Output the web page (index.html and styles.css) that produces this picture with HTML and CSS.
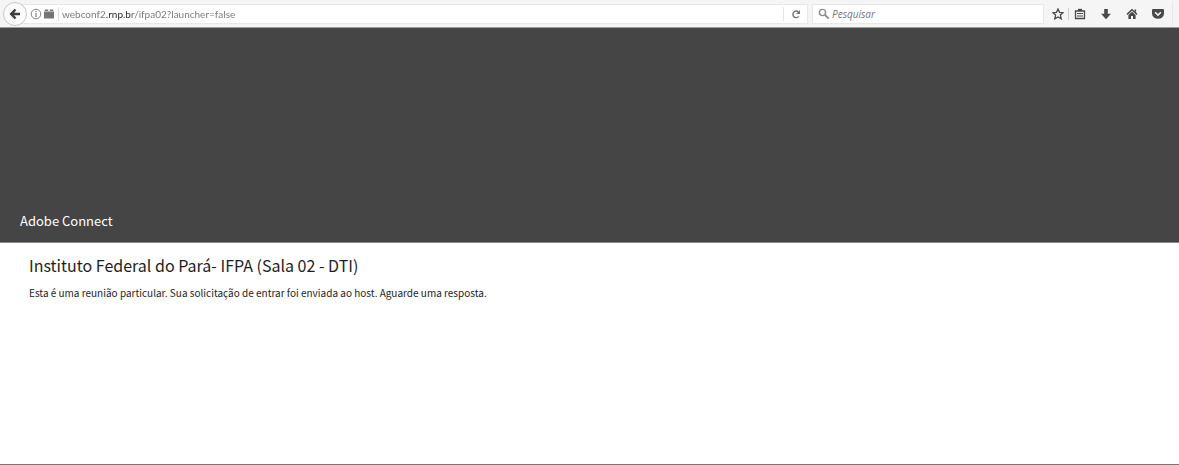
FILE: index.html
```html
<!DOCTYPE html>
<html lang="pt-BR">
<head>
  <meta charset="UTF-8">
  <meta name="viewport" content="width=device-width, initial-scale=1.0">
  <title>Adobe Connect</title>
  <link rel="stylesheet" href="styles.css">
</head>
<body>

  <!-- Barra de navegação -->
  <nav class="toolbar">
    <button class="back-btn" type="button" aria-label="Voltar">
      <svg width="12" height="12" viewBox="0 0 12 12"><path d="M6.5 1.5 2.2 6l4.3 4.5M2.5 6H11" fill="none" stroke="#3d3d3d" stroke-width="2.5"/></svg>
    </button>
    <div class="url-bar">
      <svg width="12" height="12" viewBox="0 0 12 12"><circle cx="6" cy="6" r="4.8" fill="none" stroke="#858585"/><path d="M6 5v4M6 3v1.2" stroke="#858585" stroke-width="1.2"/></svg>
      <svg width="10" height="10" viewBox="0 0 10 10"><path d="M0 2.5h10V9.5H0zM.8.5h3.4v1.4H.8zM5.8.5h3.4v1.4H5.8z" fill="#757575"/></svg>
      <input class="url-input" type="text" aria-label="Endereço" value="webconf2.rnp.br/ifpa02?launcher=false">
      <button class="reload-btn" type="button" aria-label="Recarregar">
        <svg width="10" height="10" viewBox="0 0 10 10"><path d="M7.8 7.4A3.3 3.3 0 1 1 7.4 2.8" fill="none" stroke="#757575" stroke-width="1.4"/><path d="M9 1v4H5z" fill="#757575"/></svg>
      </button>
    </div>
    <div class="search-bar">
      <svg width="12" height="12" viewBox="0 0 12 12"><circle cx="4.5" cy="4.5" r="3.1" fill="none" stroke="#8d8d8d" stroke-width="1.4"/><path d="m7 7 3.7 3.7" stroke="#8d8d8d" stroke-width="1.8"/></svg>
      <input class="search-input" type="text" aria-label="Pesquisar" placeholder="Pesquisar">
    </div>
    <div class="actions">
      <button class="star-btn" type="button" aria-label="Favoritar">
        <svg width="12" height="12" viewBox="0 0 12 12"><path d="m6 1 1.5 3.3 3.6.4-2.7 2.4.8 3.7L6 8.9l-3.2 1.9.8-3.7L.9 4.7l3.6-.4z" fill="none" stroke="#494949" stroke-width="1.3"/></svg>
      </button>
      <button type="button" aria-label="Lista de favoritos">
        <svg width="12" height="12" viewBox="0 0 12 12"><path d="M1.5 3h9v7.5h-9z" fill="none" stroke="#494949" stroke-width="1.3"/><path d="M4 .8h4V3H4z" fill="#494949"/><path d="M3 5.5h6M3 8h6" stroke="#494949" stroke-width="1.1"/></svg>
      </button>
      <button type="button" aria-label="Downloads">
        <svg width="12" height="12" viewBox="0 0 12 12"><path d="M4.2 1h3.6v4.8H11L6 11.2 1 5.8h3.2z" fill="#494949"/></svg>
      </button>
      <button type="button" aria-label="Página inicial">
        <svg width="12" height="12" viewBox="0 0 12 12"><path d="M1 6.4 6 1.8l5 4.6" fill="none" stroke="#494949" stroke-width="1.5"/><path d="M2.4 7 6 3.8 9.6 7v4H7V8H5v3H2.4zM8.6 1.6h1.5v3L8.6 3z" fill="#494949"/></svg>
      </button>
      <button type="button" aria-label="Pocket">
        <svg width="12" height="12" viewBox="0 0 12 12"><path d="M1 1h10q1 0 1 1v3.5a6 5.3 0 0 1-12 0V2q0-1 1-1z" fill="#494949"/><path d="m3.1 4.3 2.9 2.8 2.9-2.8" fill="none" stroke="#f5f5f5" stroke-width="1.5"/></svg>
      </button>
    </div>
  </nav>

  <!-- Cabeçalho da sala -->
  <header class="banner">
    <span class="brand">Adobe Connect</span>
  </header>

  <main class="content">
    <h1>Instituto Federal do Pará- IFPA (Sala 02 - DTI)</h1>
    <p>Esta é uma reunião particular. Sua solicitação de entrar foi enviada ao host. Aguarde uma resposta.</p>
  </main>

</body>
</html>
```
FILE: styles.css
```css
* {
  box-sizing: border-box;
}
body {
  margin: 0;
  min-height: 100vh;
  display: flex;
  flex-direction: column;
  font-family: "Noto Sans CJK SC", "Noto Sans", sans-serif;
  color: #1e1e1e;
  background-color: #fff;
  border-bottom: 1px solid #777;
}
svg {
  display: block;
  flex: none;
}
button {
  display: flex;
  align-items: center;
  justify-content: center;
  padding: 0;
  border: none;
  background: none;
}
input {
  min-width: 0;
  padding: 0;
  border: none;
  outline: none;
  font-size: 10px;
}
.toolbar {
  display: flex;
  align-items: center;
  height: 28px;
  padding-left: 3px;
  background-color: #f5f5f5;
  border-bottom: 1px solid #999;
}
.back-btn {
  position: relative;
  z-index: 1;
  width: 24px;
  height: 24px;
  flex: none;
  border: 1px solid #c8c8c8;
  border-radius: 50%;
  background-color: #fbfbfb;
}
.url-bar,
.search-bar {
  display: flex;
  align-items: center;
  height: 20px;
  background-color: #fff;
  border: 1px solid #e8e8e8;
}
.url-bar {
  flex: 1;
  gap: 2px;
  margin-left: -12px;
  padding-left: 14px;
}
/* o domínio principal fica mais escuro que o resto do endereço */
.url-input {
  flex: 1;
  height: 14px;
  margin-left: 2px;
  padding-left: 3px;
  border-left: 1px solid #ddd;
  font-family: Lato, "Noto Sans", sans-serif;
  color: transparent;
  background: linear-gradient(90deg, #757575 47px, #222 47px, #222 73px, #757575 73px);
  -webkit-background-clip: text;
  background-clip: text;
}
.reload-btn {
  width: 24px;
  height: 14px;
  border-left: 1px solid #e4e4e4;
}
.search-bar {
  width: 232px;
  gap: 2px;
  margin-left: 4px;
  padding-left: 5px;
}
.search-input {
  flex: 1;
  font-family: "Open Sans", "Noto Sans", sans-serif;
}
.search-input::placeholder {
  color: #757575;
  font-style: italic;
}
.actions {
  display: flex;
  align-items: center;
  margin-left: 3px;
  margin-right: 6px;
  padding-right: 1px;
  border-right: 1px solid #e8e8e8;
}
.actions button {
  width: 26px;
  height: 24px;
}
.actions .star-btn {
  width: 22px;
  height: 12px;
  margin-right: -2px;
  border-right: 1px solid #d0d0d0;
}
.banner {
  display: flex;
  align-items: flex-end;
  height: 215px;
  padding: 0 20px 10px;
  background-color: #454545;
  border-bottom: 1px solid #8a8a8a;
}
.brand {
  font-size: 13px;
  line-height: 22px;
  color: #fff;
}
.content {
  padding: 10px 29px;
}
h1 {
  margin: 0 0 8px;
  font-size: 16px;
  line-height: 24px;
  font-weight: 400;
}
p {
  margin: 0;
  font-size: 10px;
  line-height: 16px;
}
```
